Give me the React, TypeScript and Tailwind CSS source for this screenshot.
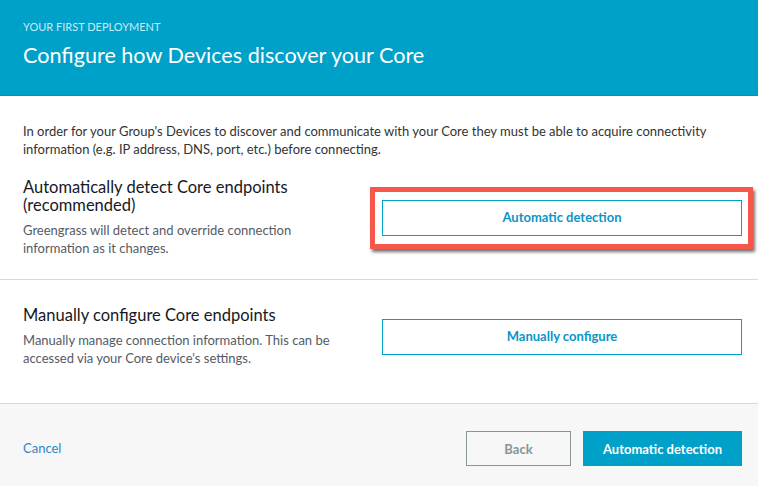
import React from 'react';

export default function App() {
  return (
    <div className="w-[758px] h-[486px] bg-white flex flex-col font-['Lato',sans-serif] overflow-hidden">
      <header className="h-[96px] bg-[#00a1c9] border-b border-[#0b8fb5] px-[23px] pt-[20px]">
        <div className="text-[11px] leading-[14px] text-[#c4ecf7] uppercase">Your first deployment</div>
        <h1 className="mt-[7px] text-[21.6px] leading-[28px] text-white">Configure how Devices discover your Core</h1>
      </header>

      <main className="flex-1 flex flex-col">
        <p className="px-[23px] pt-[26px] text-[13px] leading-[18px] text-[#333]">
          In order for your Group's Devices to discover and communicate with your Core they must be able to acquire
          connectivity information (e.g. IP address, DNS, port, etc.) before connecting.
        </p>

        <section className="flex items-center px-[23px] pr-[16px] pt-[20px] pb-[22px] border-b border-[#d5dbdb]">
          <div className="w-[310px]">
            <h2 className="text-[16.5px] leading-[18px] text-[#16191f]">Automatically detect Core endpoints (recommended)</h2>
            <p className="mt-[8px] text-[13px] leading-[17.5px] text-[#545b64]">
              Greengrass will detect and override connection information as it changes.
            </p>
          </div>
          <div className="ml-auto relative w-[360px]">
            <div className="absolute -left-[12px] -right-[11px] -top-[13px] -bottom-[13px] border-[5px] border-[#f7574b] shadow-[2px_3px_3px_rgba(0,0,0,0.55)]" />
            <button className="relative w-full h-[36px] border border-[#00a1c9] bg-white text-[13px] font-bold text-[#0a95c8]">
              Automatic detection
            </button>
          </div>
        </section>

        <section className="flex items-center px-[23px] pr-[16px] pt-[26px] pb-[36px] border-b border-[#d5dbdb]">
          <div className="w-[330px]">
            <h2 className="text-[16.5px] leading-[18px] text-[#16191f]">Manually configure Core endpoints</h2>
            <p className="mt-[8px] text-[13px] leading-[17.5px] text-[#545b64]">
              Manually manage connection information. This can be accessed via your Core device's settings.
            </p>
          </div>
          <button className="ml-auto w-[360px] h-[36px] border border-[#00a1c9] bg-white text-[13px] font-bold text-[#0a95c8]">
            Manually configure
          </button>
        </section>

        <footer className="flex-1 bg-[#f7f7f7] flex items-start px-[23px] pr-[16px] pt-[27px]">
          <a className="mt-[8px] text-[13px] leading-[18px] text-[#2f84c4]">Cancel</a>
          <div className="ml-auto flex gap-[12px]">
            <button className="w-[105px] h-[35px] pt-[2px] border border-[#879596] bg-[#f7f7f7] text-[13px] font-bold text-[#879596]">
              Back
            </button>
            <button className="w-[159px] h-[35px] pt-[2px] bg-[#00a1c9] text-[13px] font-bold text-white">
              Automatic detection
            </button>
          </div>
        </footer>
      </main>
    </div>
  );
}
